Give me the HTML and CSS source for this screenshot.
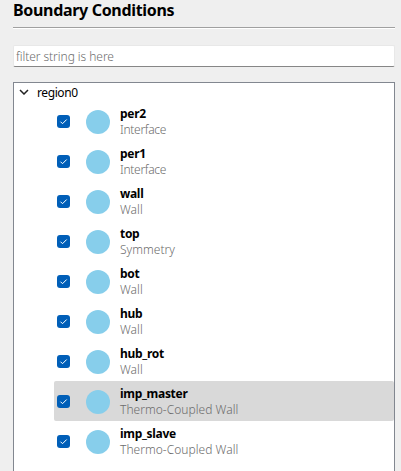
FILE: index.html
```html
<!DOCTYPE html>
<html lang="en">
<head>
<meta charset="utf-8">
<title>Boundary Conditions</title>
<link rel="stylesheet" href="styles.css">
</head>
<body>
<main class="panel">
  <h1 class="title">Boundary Conditions</h1>
  <div class="filter">filter string is here</div>
  <section class="tree">
    <div class="region">
      <svg class="chevron" viewBox="0 0 10 6"><path d="M1 1l4 4 4-4"/></svg>
      <span class="region-name">region0</span>
    </div>
    <ul class="list" id="list"></ul>
  </section>
</main>
<script src="script.js"></script>
</body>
</html>
```
FILE: styles.css
```css
* { box-sizing: border-box; }
body {
  margin: 0;
  height: 471px;
  overflow: hidden;
  background: #efefef;
  color: #000;
  font: 12px/16px "Noto Sans", sans-serif;
}
.panel {
  display: flex;
  flex-direction: column;
  height: 471px;
  padding: 0 6px 0 13px;
}
.title {
  flex: none;
  height: 29px;
  margin: 0 0 16px;
  border-bottom: 1px solid #fff;
  box-shadow: inset 0 -1px #a0a0a0;
  font-size: 16px;
  line-height: 20px;
  font-weight: 700;
  letter-spacing: -0.32px;
  white-space: nowrap;
}
.filter {
  flex: none;
  height: 22px;
  margin-bottom: 15px;
  padding: 3px 2px 0;
  border: 1px solid #e8e8e8;
  border-bottom-color: #868686;
  border-radius: 2px;
  background: #fff;
  color: #6c6c6c;
  font-weight: 300;
  letter-spacing: -0.05px;
}
.tree {
  flex: 1;
  border: 1px solid #828790;
  border-bottom: 0;
  background: #fff;
  overflow: hidden;
}
.region {
  display: flex;
  align-items: center;
  height: 18px;
  padding-left: 5px;
}
.chevron {
  width: 10px;
  height: 6px;
  margin-right: 8px;
  fill: none;
  stroke: #222;
  stroke-width: 1.5;
}
.region-name { padding-top: 2px; letter-spacing: -0.4px; }
.list { margin: 0; padding: 0 0 0 40px; list-style: none; }
.item {
  display: flex;
  align-items: center;
  height: 40px;
  padding-left: 3px;
  border-radius: 2px;
}
.item.selected { background: #d9d9d9; }
.check { width: 13px; height: 13px; border-radius: 3px; background: #005fb8; }
.check path { fill: none; stroke: #fff; stroke-width: 1; }
.dot {
  width: 24px;
  height: 24px;
  margin: 2px 10px 0 16px;
  border-radius: 50%;
  background: #87ceeb;
}
.label { display: flex; flex-direction: column; padding-top: 2px; }
.name { font-weight: 700; letter-spacing: -0.3px; }
.type { color: #6c6c6c; font-weight: 300; letter-spacing: 0.03px; }
.type.interface { letter-spacing: -0.3px; }
```
FILE: script.js
```js
const items = [
  ["per2", "Interface"], ["per1", "Interface"], ["wall", "Wall"],
  ["top", "Symmetry"], ["bot", "Wall"], ["hub", "Wall"],
  ["hub_rot", "Wall"], ["imp_master", "Thermo-Coupled Wall"],
  ["imp_slave", "Thermo-Coupled Wall"]
];
document.getElementById("list").innerHTML = items.map(([name, type]) => `
  <li class="item${name === "imp_master" ? " selected" : ""}">
    <svg class="check" viewBox="0 0 13 13"><path d="M3.5 6.7l2 2 4.2-4.2"/></svg>
    <span class="dot"></span>
    <span class="label"><span class="name">${name}</span><span class="type ${type.split(" ")[0].toLowerCase()}">${type}</span></span>
  </li>`).join("");
```
